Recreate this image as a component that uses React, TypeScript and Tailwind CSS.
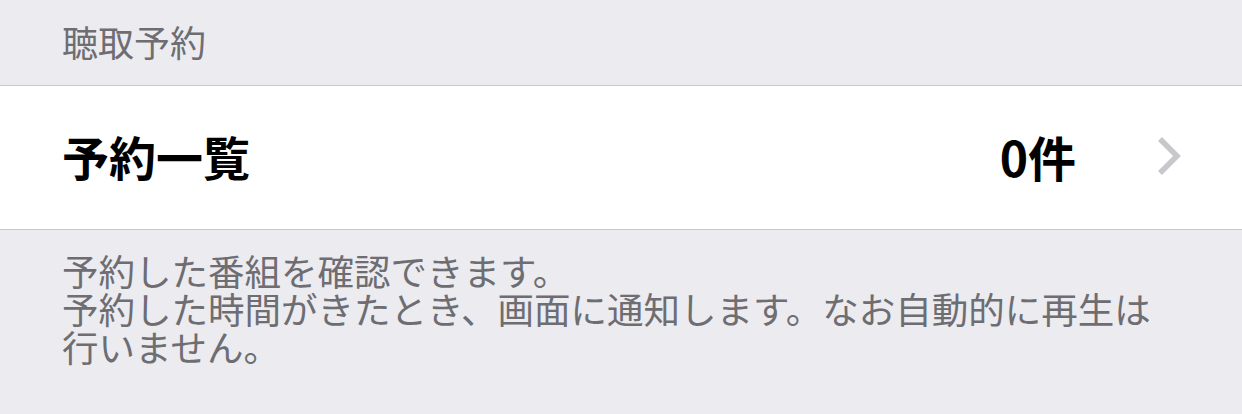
export default function App() {
  return (
    <div
      className="w-[1242px] h-[414px] overflow-hidden bg-[#ebebf0]"
      style={{ fontFamily: '"Noto Sans CJK JP", "Noto Sans", sans-serif' }}
    >
      {/* section header */}
      <div className="h-[85px] flex items-center pl-[62px] pb-[4px]">
        <span className="text-[36px] leading-none text-[#6d6d72]">聴取予約</span>
      </div>

      {/* row */}
      <div className="h-[145px] bg-white border-y border-[#c8c7cc] flex items-center pl-[62px] pr-[60px] pb-[4px]">
        <span className="text-[47px] font-bold leading-none text-black">予約一覧</span>
        <span className="ml-auto text-[48px] font-bold leading-none text-black">0件</span>
        <svg className="ml-[80px] w-[26px] h-[40px]" viewBox="0 0 26 40" fill="none">
          <path d="M4 3 L21 20 L4 37" stroke="#c7c7cc" strokeWidth="5.5" strokeLinecap="butt" strokeLinejoin="miter" />
        </svg>
      </div>

      {/* footer description */}
      <div className="pl-[62px] pt-[22px] text-[36.5px] leading-[38px] text-[#6d6d72]">
        <p>予約した番組を確認できます。</p>
        <p>予約した時間がきたとき、画面に通知します。なお自動的に再生は</p>
        <p>行いません。</p>
      </div>
    </div>
  )
}
